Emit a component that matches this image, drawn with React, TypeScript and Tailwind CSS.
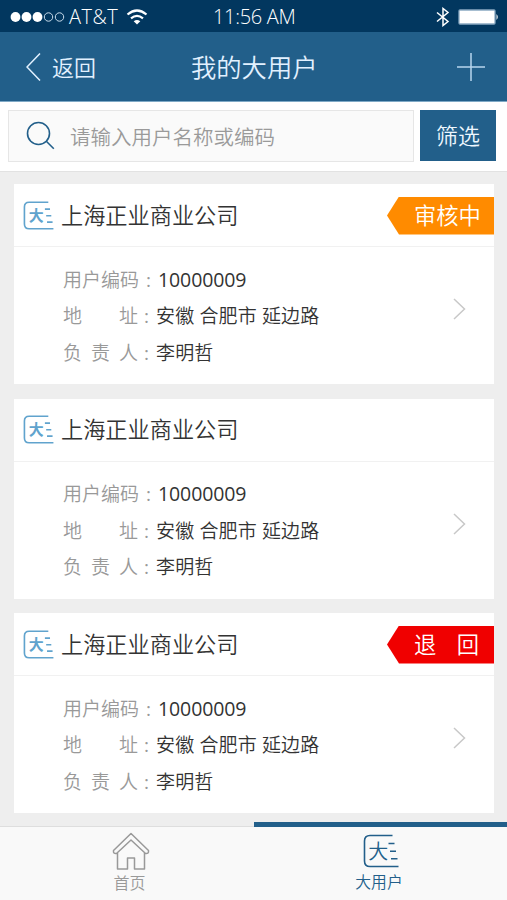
type Status = 'pending' | 'returned';

interface Customer {
  id: number;
  name: string;
  code: string;
  address: string;
  owner: string;
  status?: Status;
}

const customers: Customer[] = [
  { id: 1, name: '上海正业商业公司', code: '10000009', address: '安徽 合肥市 延边路', owner: '李明哲', status: 'pending' },
  { id: 2, name: '上海正业商业公司', code: '10000009', address: '安徽 合肥市 延边路', owner: '李明哲' },
  { id: 3, name: '上海正业商业公司', code: '10000009', address: '安徽 合肥市 延边路', owner: '李明哲', status: 'returned' },
];

function BigUserIcon({ className, bold }: { className: string; bold?: boolean }) {
  return (
    <svg viewBox="0 0 36 34" className={className} fill="none" stroke="currentColor" strokeWidth={bold ? 1.9 : 1.6}>
      <path d="M29.500 1.500H7Q1.500 1.500 1.500 7v20q0 5.500 5.500 5.500h28.500" />
      <path d="M25.500 9.500h6M27 17.300h6M28 24.700h6.500" />
      <text
        x="15.300"
        y={bold ? 23.5 : 24.5}
        textAnchor="middle"
        fontSize={bold ? 17.5 : 20}
        fill="currentColor"
        stroke="none"
        className={bold ? 'font-bold' : 'font-[350]'}
      >
        大
      </text>
    </svg>
  );
}

function StatusBar() {
  return (
    <div className="flex h-8 items-center bg-[#02375f] text-white">
      <div className="flex w-[213px] items-center pl-[10px] pt-[2px]">
        <svg className="h-[12px] w-[55px]" viewBox="0 0 55 12" fill="white">
          <circle cx="5.500" cy="6" r="4.900" />
          <circle cx="16.500" cy="6" r="4.900" />
          <circle cx="27.500" cy="6" r="4.900" />
          <circle cx="38.500" cy="6" r="4.200" fill="none" stroke="#c9dcec" />
          <circle cx="49.500" cy="6" r="4.200" fill="none" stroke="#c9dcec" />
        </svg>
        <span className="ml-[4px] w-[53px] whitespace-nowrap text-[20px] leading-none tracking-[0.5px]">AT&amp;T</span>
        <svg className="ml-[4px] h-[16px] w-[22px]" viewBox="0 0 22 16" fill="none" stroke="white" strokeWidth="2.200">
          <path d="M1.500 5.500Q11-2.500 20.500 5.500M5 9.300q6-5 12 0" />
          <path d="M11 15.500l-3.300-3.300q3.300-2.600 6.600 0z" fill="white" stroke="none" />
        </svg>
      </div>
      <span className="w-[90px] whitespace-nowrap pt-[2px] text-[20px] leading-none tracking-[-0.300px]">11:56 AM</span>
      <svg className="ml-[133px] mt-[2px] h-[20px] w-[14px]" viewBox="0 0 14 20" fill="none" stroke="white" strokeWidth="1.500">
        <path d="M1 5.500l11 9-5 4V1.500l5 4-11 9" />
      </svg>
      <svg className="ml-[8px] mt-[2px] h-[16px] w-[41px]" viewBox="0 0 41 16">
        <rect x="1" y="1" width="36" height="14" rx="1" fill="white" stroke="#8aa9c2" strokeWidth="1.300" />
        <path d="M38.500 5q2.500 3 0 6z" fill="white" />
      </svg>
    </div>
  );
}

function Header() {
  return (
    <header className="flex h-[70px] items-center border-b border-[#7fa9c6] bg-[#225f8a] text-[#e2f1ff]">
      <div className="flex w-[191px] items-center pl-[26px]">
        <svg className="h-[28px] w-[15px]" viewBox="0 0 15 28" fill="none" stroke="currentColor" strokeWidth="1.500">
          <path d="M14 .5L1 14l13 13.500" />
        </svg>
        <span className="ml-[11px] text-[22px] leading-none">返回</span>
      </div>
      <h1 className="w-[128px] whitespace-nowrap pt-[2px] text-[25.300px] leading-none">我的大用户</h1>
      <svg className="ml-[137px] h-[30px] w-[30px] text-[#b8d6ee]" viewBox="0 0 30 30" stroke="currentColor" strokeWidth="1.500">
        <path d="M1 15h28M15 1v28" />
      </svg>
    </header>
  );
}

function SearchBar() {
  return (
    <div className="flex h-[69px] gap-[6px] bg-white pl-2 pt-2">
      <div className="flex h-[52px] w-[406px] items-center border border-[#e6e6e6] bg-[#fafafa] pl-[17px]">
        <svg className="-mt-[2px] h-[29px] w-[29px]" viewBox="0 0 29 29" fill="none" stroke="#225f8a" strokeWidth="1.600">
          <circle cx="12.500" cy="12.500" r="11" />
          <path d="M20.300 20.300l7.500 7.500" />
        </svg>
        <span className="ml-[15px] whitespace-nowrap pt-[2px] text-[20.500px] leading-none text-[#9a9a9a]">请输入用户名称或编码</span>
      </div>
      <button className="h-[51px] w-[76px] bg-[#225f8a] pb-[2px] text-[22px] leading-none text-[#edf7ff]">筛选</button>
    </div>
  );
}

function StatusTag({ status }: { status: Status }) {
  const pending = status === 'pending';
  return (
    <div
      className={`flex h-[38px] w-[107px] items-center pl-[27px] pt-[2px] text-[22.300px] leading-none text-white [clip-path:polygon(12px_0,100%_0,100%_100%,12px_100%,0_50%)] ${pending ? 'bg-[#ff8b00]' : 'bg-[#f00000]'}`}
    >
      {pending ? (
        <span className="whitespace-nowrap">审核中</span>
      ) : (
        <span className="flex w-[65px] justify-between">
          <span>退</span>
          <span>回</span>
        </span>
      )}
    </div>
  );
}

function Field({ label, value, width, colon }: { label: string; value: string; width: string; colon: string }) {
  const numeric = /^\d+$/.test(value);
  return (
    <div className="flex h-[36.500px] items-center whitespace-nowrap text-[19px] leading-none">
      <span className={`flex justify-between text-[#999] ${width}`}>
        {label.split('').map((c) => (
          <span key={c}>{c}</span>
        ))}
      </span>
      <span className={`font-normal text-[#999] ${colon}`}>:</span>
      <span className={`text-[#333] ${numeric ? 'pb-[2px] text-[19.500px] font-normal tracking-[-0.100px]' : 'tracking-[0.150px]'}`}>{value}</span>
    </div>
  );
}

function CustomerCard({ customer }: { customer: Customer }) {
  return (
    <article className="h-[200px] w-[480px] bg-white">
      <div className="flex h-[63px] items-center border-b border-[#f1f1f1] pl-[9px]">
        <BigUserIcon bold className="h-[29px] w-[31px] text-[#60a3cd]" />
        <h2 className="ml-[7px] whitespace-nowrap pt-[2px] text-[22.200px] leading-none text-[#333]">{customer.name}</h2>
        {customer.status && (
          <div className="ml-auto pt-px">
            <StatusTag status={customer.status} />
          </div>
        )}
      </div>
      <div className="flex items-center justify-between pl-[49px] pr-[28px] pt-[15px]">
        <div>
          <Field label="用户编码" value={customer.code} width="w-[76px]" colon="w-[19px] pl-[7px]" />
          <Field label="地址" value={customer.address} width="w-[75px]" colon="w-[18px] pl-[6px]" />
          <Field label="负责人" value={customer.owner} width="w-[75px]" colon="w-[18px] pl-[6px]" />
        </div>
        <svg className="mb-[15px] h-[22px] w-[13px]" viewBox="0 0 13 22" fill="none" stroke="#c8c8c8" strokeWidth="1.500">
          <path d="M1 1l10.500 10L1 21" />
        </svg>
      </div>
    </article>
  );
}

function TabBar() {
  return (
    <nav className="flex h-[78px]">
      <div className="flex w-[254px] flex-col pt-[4px]">
        <div className="flex h-[74px] flex-col items-center border-t border-[#dedede] bg-[#f9f9f9] pl-[6px] pt-[5px] text-[#999]">
          <svg className="ml-[2px] h-[38px] w-[38px]" viewBox="0 0 38 38" fill="none" stroke="currentColor" strokeWidth="1.500" strokeLinejoin="round">
            <path d="M19 1.500L1.500 18.500q-.5 3.500 3 3L19 8l14.500 13.500q3.500.5 3-3z" />
            <path d="M5.500 21v16h10V26h7v11h10V21" />
          </svg>
          <span className="mr-[1px] mt-[5px] text-[16px] leading-none">首页</span>
        </div>
      </div>
      <div className="flex flex-1 flex-col items-center border-t-[5px] border-[#225f8a] bg-[#f9f9f9] pt-[7px] text-[#225f8a]">
        <BigUserIcon className="h-[34px] w-[36px]" />
        <span className="mr-[3px] mt-[7px] text-[15.800px] leading-none">大用户</span>
      </div>
    </nav>
  );
}

export default function App() {
  return (
    <div className="flex h-[900px] w-[507px] flex-col overflow-hidden bg-[#eee] font-[350] [font-family:'Open_Sans','Noto_Sans_CJK_SC',sans-serif]">
      <StatusBar />
      <Header />
      <SearchBar />
      <main className="flex h-[651px] flex-col gap-[14.500px] border-t border-[#e2e2e2] pl-[14px] pt-[12px]">
        {customers.map((c) => (
          <CustomerCard key={c.id} customer={c} />
        ))}
      </main>
      <TabBar />
    </div>
  );
}
